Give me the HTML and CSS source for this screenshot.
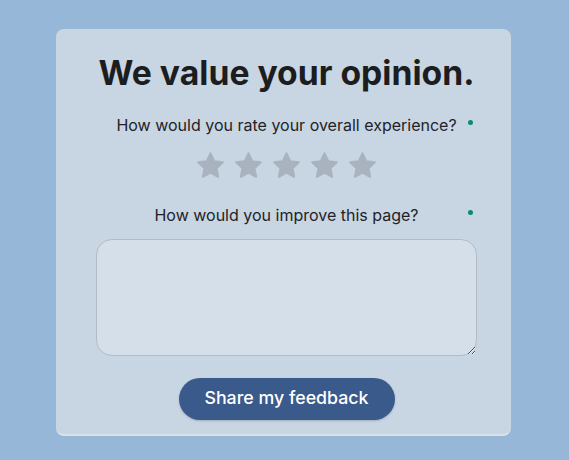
FILE: index.html
```html
<!DOCTYPE html>
<html lang="en">
<head>
<meta charset="utf-8">
<title>Feedback</title>
<link rel="stylesheet" href="styles.css">
</head>
<body>
<main class="card">
  <h1 class="title">We value your opinion.</h1>
  <div class="field-label">
    <span class="label-text">How would you rate your overall experience?</span>
    <span class="req"></span>
  </div>
  <div class="stars">
    <svg class="star" viewBox="0 0 24 24"><path d="M12 2.6l2.9 6.1 6.6.8-4.9 4.6 1.3 6.6L12 17.4l-5.9 3.3 1.3-6.6-4.9-4.6 6.6-.8z"/></svg>
    <svg class="star" viewBox="0 0 24 24"><path d="M12 2.6l2.9 6.1 6.6.8-4.9 4.6 1.3 6.6L12 17.4l-5.9 3.3 1.3-6.6-4.9-4.6 6.6-.8z"/></svg>
    <svg class="star" viewBox="0 0 24 24"><path d="M12 2.6l2.9 6.1 6.6.8-4.9 4.6 1.3 6.6L12 17.4l-5.9 3.3 1.3-6.6-4.9-4.6 6.6-.8z"/></svg>
    <svg class="star" viewBox="0 0 24 24"><path d="M12 2.6l2.9 6.1 6.6.8-4.9 4.6 1.3 6.6L12 17.4l-5.9 3.3 1.3-6.6-4.9-4.6 6.6-.8z"/></svg>
    <svg class="star" viewBox="0 0 24 24"><path d="M12 2.6l2.9 6.1 6.6.8-4.9 4.6 1.3 6.6L12 17.4l-5.9 3.3 1.3-6.6-4.9-4.6 6.6-.8z"/></svg>
  </div>
  <div class="field-label second">
    <span class="label-text">How would you improve this page?</span>
    <span class="req"></span>
  </div>
  <textarea class="answer"></textarea>
  <button class="submit" type="button">Share my feedback</button>
</main>
</body>
</html>
```

FILE: styles.css
```css
html, body {
  margin: 0;
  padding: 0;
}
body {
  background: #97b7d9;
  font-family: Inter, "Open Sans", sans-serif;
  color: #1f2328;
  height: 460px;
}
.card {
  box-sizing: border-box;
  width: 455px;
  height: 407px;
  margin: 29px 0 0 56px;
  background: #c8d5e2;
  border-radius: 8px;
  border-bottom: 2px solid #dbe2ea;
  display: flex;
  flex-direction: column;
  align-items: center;
  padding-top: 21px;
}
.title {
  margin: 0 0 0 6px;
  font-size: 33.7px;
  font-weight: 700;
  color: #1c1d1f;
  line-height: 46px;
}
.field-label {
  width: 381px;
  display: grid;
  grid-template-columns: 1fr auto 1fr;
  align-items: start;
  margin-top: 19px;
  font-size: 16px;
  line-height: 20px;
  color: #1f2328;
  padding-left: 6px;
}
.label-text {
  grid-column: 2;
}
.req {
  grid-column: 3;
  justify-self: end;
  width: 5px;
  height: 5px;
  border-radius: 50%;
  background: #0b8a70;
  margin-top: 5px;
  margin-right: 4px;
}
.stars {
  display: flex;
  gap: 7px;
  margin: 15px 0 0 6px;
}
.star {
  display: block;
  width: 31px;
  height: 31px;
  fill: #a8b3bf;
  stroke: #a8b3bf;
  stroke-width: 1.6;
  stroke-linejoin: round;
}
.second {
  margin-top: 24px;
}
.answer {
  box-sizing: border-box;
  width: 381px;
  height: 117px;
  margin: 14px 0 0 6px;
  background: #d5dfe9;
  border: 1px solid #b2bcc7;
  border-radius: 16px;
  resize: vertical;
  font-family: inherit;
}
.submit {
  margin: 22px 0 0 6px;
  width: 216px;
  height: 42px;
  padding: 0 0 4px;
  border: none;
  border-radius: 21px;
  background: #3a5a8c;
  box-shadow: 0 1px 2px rgba(40, 60, 90, 0.25);
  color: #ffffff;
  font-family: inherit;
  font-size: 17.8px;
  font-weight: 500;
}
```
